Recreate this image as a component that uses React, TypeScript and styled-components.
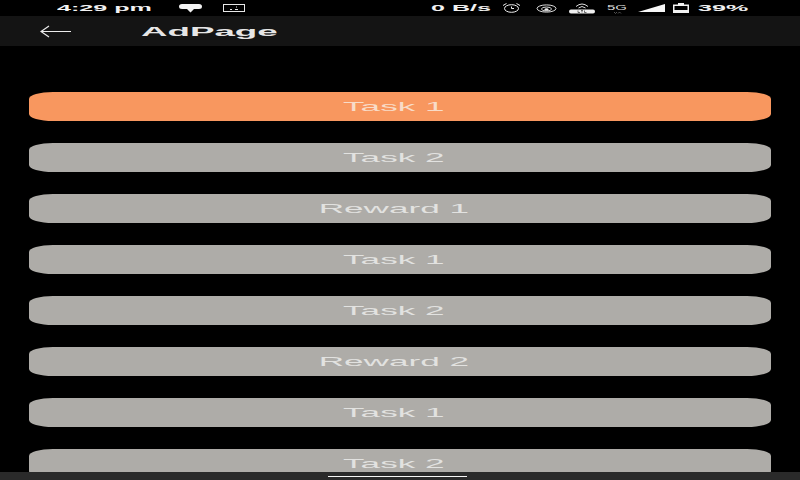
import styled, { createGlobalStyle } from 'styled-components'

const GlobalStyle = createGlobalStyle`
  html, body {
    margin: 0;
    background: #000;
  }
`

const Page = styled.div`
  width: 800px;
  height: 480px;
  display: flex;
  flex-direction: column;
  overflow: hidden;
  background: #000;
  font-family: 'Liberation Sans', Arial, sans-serif;
`

const StatusBar = styled.div`
  height: 16px;
  flex: none;
  display: flex;
  align-items: center;
  padding: 0 53px 0 57px;
  color: #f2f2f2;
`

const StatusGroup = styled.div`
  display: flex;
  align-items: center;
  gap: 21px;
`

const StatusRight = styled(StatusGroup)`
  margin-left: auto;
  gap: 0;
`

/* the whole reference is squeezed vertically, so text is widened to match */
const Wide = styled.span<{ $w: number; $ml?: number }>`
  display: inline-block;
  width: ${p => p.$w}px;
  margin-left: ${p => p.$ml ?? 0}px;
  white-space: nowrap;
  > span {
    display: inline-block;
    transform: scaleX(2.7);
    transform-origin: left center;
  }
`

const StatusText = styled(Wide)`
  font-size: 9.3px;
  font-weight: 700;
`

const Glyph = styled.svg<{ $ml?: number }>`
  display: block;
  flex: none;
  margin-left: ${p => p.$ml ?? 0}px;
`

const AppBar = styled.div`
  height: 30px;
  flex: none;
  display: flex;
  align-items: center;
  padding-left: 40px;
  background: #141414;
  color: #e6e6e6;
`

const Title = styled(Wide)`
  font-size: 13.6px;
  font-weight: 700;
`

const List = styled.div`
  flex: 1;
  min-height: 0;
  overflow: hidden;
  display: flex;
  flex-direction: column;
  gap: 22px;
  padding: 46px 29px 0;
`

const TaskButton = styled.div<{ $active?: boolean }>`
  height: 29px;
  flex: none;
  display: flex;
  align-items: center;
  justify-content: center;
  padding-right: 13px;
  border-radius: 24px / 7px;
  background: ${p => (p.$active ? '#f8975f' : '#aeaca8')};
  color: ${p => (p.$active ? '#f8dcc8' : '#e2e2e0')};
  font-size: 13px;
`

const Label = styled.span`
  display: inline-block;
  transform: scaleX(2.7);
`

const NavBar = styled.div`
  height: 8px;
  flex: none;
  display: flex;
  align-items: center;
  justify-content: center;
  padding-right: 5px;
  background: #2a2a2a;
`

const NavHandle = styled.div`
  width: 139px;
  height: 1px;
  background: #f5f5f5;
`

const tasks = ['Task 1', 'Task 2', 'Reward 1', 'Task 1', 'Task 2', 'Reward 2', 'Task 1', 'Task 2']

export default function App() {
  return (
    <Page>
      <GlobalStyle />
      <StatusBar>
        <StatusGroup>
          <StatusText $w={101}><span>4:29 pm</span></StatusText>
          <Glyph width="23" height="9" viewBox="0 0 23 9">
            <path d="M3 0h17q3 0 3 2.500T20 5h-5l-3.500 3.500L8 5H3Q0 5 0 2.500T3 0z" fill="#f2f2f2" />
          </Glyph>
          <Glyph width="22" height="8" viewBox="0 0 22 8">
            <rect x="0.500" y="0.500" width="21" height="7" fill="none" stroke="#e8e8e8" />
            <path d="M7 5.500h2M12 5.500h3M13 3h1" stroke="#e8e8e8" />
          </Glyph>
        </StatusGroup>
        <StatusRight>
          <StatusText $w={72}><span>0 B/s</span></StatusText>
          <Glyph width="17" height="10" viewBox="0 0 17 10">
            <ellipse cx="8.500" cy="5.500" rx="7" ry="3.800" fill="none" stroke="#eee" />
            <path d="M0 2.500l3.500-2M17 2.500l-3.500-2M8.500 3.500v2h2.500" fill="none" stroke="#eee" />
          </Glyph>
          <Glyph $ml={16} width="21" height="9" viewBox="0 0 21 9">
            <ellipse cx="10.500" cy="4.500" rx="9.500" ry="3.600" fill="none" stroke="#ddd" />
            <ellipse cx="10.500" cy="5" rx="5" ry="2" fill="none" stroke="#ddd" />
            <ellipse cx="10.500" cy="5.500" rx="2" ry="1.200" fill="#eee" />
          </Glyph>
          <Glyph $ml={12} width="26" height="12" viewBox="0 0 26 12">
            <path d="M7 4.500Q13-.5 19 4.500M9.500 6Q13 3 16.500 6" fill="none" stroke="#ddd" />
            <rect x="0" y="7.500" width="26" height="4" rx="2" fill="#f0f0f0" />
            <path d="M9 8.500v2h2M12 8.500h2M13 8.500v2M15.500 8.500v2h2" stroke="#333" strokeWidth="0.700" fill="none" />
          </Glyph>
          <Glyph $ml={12} width="20" height="11" viewBox="0 0 20 11">
            <text x="0" y="7" fontSize="6.500" fontFamily="Liberation Sans, sans-serif" fill="#ddd" textLength="20" lengthAdjust="spacingAndGlyphs">5G</text>
            <path d="M7 9l1.500 1.500L10 9M11 10.500l1.500-1.500 1.500 1.500" stroke="#777" fill="none" strokeWidth="0.700" />
          </Glyph>
          <Glyph $ml={11} width="27" height="8" viewBox="0 0 27 8">
            <path d="M0 8L27 0v8z" fill="#f7f7f7" />
          </Glyph>
          <Glyph $ml={8} width="16" height="10" viewBox="0 0 16 10">
            <path d="M5 0h6v1.500h5V10H0V1.500h5z" fill="#f2f2f2" />
            <rect x="1.500" y="3" width="13" height="4" fill="#000" />
          </Glyph>
          <StatusText $w={49} $ml={9}><span>39%</span></StatusText>
        </StatusRight>
      </StatusBar>
      <AppBar>
        <Glyph width="31" height="13" viewBox="0 0 31 13">
          <path d="M31 6.500H1M9 1L1 6.500L9 12" fill="none" stroke="#ececec" strokeWidth="1.200" />
        </Glyph>
        <Title $w={136} $ml={70}><span>AdPage</span></Title>
      </AppBar>
      <List>
        {tasks.map((task, i) => (
          <TaskButton key={i} $active={i === 0}>
            <Label>{task}</Label>
          </TaskButton>
        ))}
      </List>
      <NavBar>
        <NavHandle />
      </NavBar>
    </Page>
  )
}
